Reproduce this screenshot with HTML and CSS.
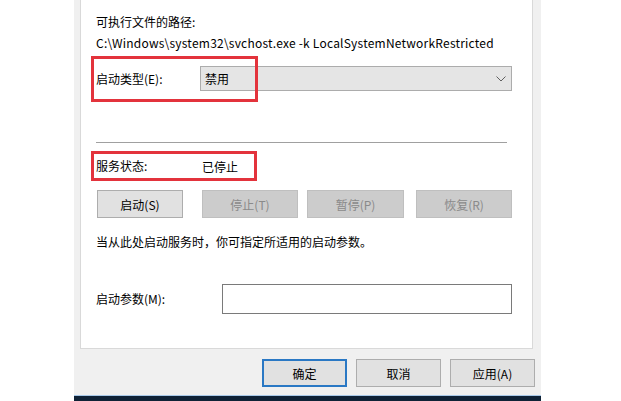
FILE: index.html
```html
<!DOCTYPE html>
<html lang="zh-CN">
<head>
<meta charset="utf-8">
<title>服务属性</title>
<link rel="stylesheet" href="styles.css">
</head>
<body>
<div class="page">
  <div class="dialog">
    <div class="panel">
      <div class="line">可执行文件的路径:</div>
      <div class="line path">C:\Windows\system32\svchost.exe -k LocalSystemNetworkRestricted</div>

      <div class="row startup">
        <span class="label">启动类型(E):</span>
        <div class="select">
          <span class="select-value">禁用</span>
          <svg class="chevron" width="10" height="6" viewBox="0 0 10 6"><polyline points="0.5,0.5 5,5 9.5,0.5" fill="none" stroke="#606060" stroke-width="1"/></svg>
        </div>
        <div class="mark mark-startup"></div>
      </div>

      <div class="separator"></div>

      <div class="row status">
        <span class="label">服务状态:</span>
        <span class="status-value">已停止</span>
        <div class="mark mark-status"></div>
      </div>

      <div class="actions">
        <button class="btn btn-start">启动(S)</button>
        <button class="btn btn-stop" disabled>停止(T)</button>
        <button class="btn btn-pause" disabled>暂停(P)</button>
        <button class="btn btn-resume" disabled>恢复(R)</button>
      </div>

      <div class="line hint">当从此处启动服务时，你可指定所适用的启动参数。</div>

      <div class="row params">
        <span class="label param-label">启动参数(M):</span>
        <div class="input"></div>
      </div>
    </div>

    <div class="footer">
      <button class="btn btn-foot btn-ok">确定</button>
      <button class="btn btn-foot">取消</button>
      <button class="btn btn-foot">应用(A)</button>
    </div>
  </div>
</div>
</body>
</html>
```

FILE: styles.css
```css
html, body {
  margin: 0;
  padding: 0;
  background: #ffffff;
}

body {
  width: 621px;
  height: 401px;
  overflow: hidden;
  font-family: "Noto Sans CJK SC", "Noto Sans", sans-serif;
  font-size: 12px;
  color: #000000;
}

.page {
  padding-left: 74px;
}

.dialog {
  width: 467px;
  height: 396px;
  background: #f0f0f0;
  padding: 0 6px 0 6px;
  box-sizing: border-box;
  border-bottom: 1px solid #a9c9e8;
  box-shadow: 0 5px 0 0 #0f2236;
  display: flex;
  flex-direction: column;
}

.panel {
  width: 453px;
  box-sizing: border-box;
  background: #ffffff;
  border: 1px solid #d9d9d9;
  border-top: none;
  padding: 14px 20px 35px 15px;
  height: 349px;
}

.line {
  line-height: 16px;
  height: 16px;
  white-space: nowrap;
}

.path {
  margin-top: 5px;
  letter-spacing: 0.22px;
}

.row {
  position: relative;
  display: flex;
  align-items: center;
}

.label {
  line-height: 16px;
}

.startup {
  margin-top: 15px;
  height: 25px;
}

.startup .label {
  width: 104px;
  flex: none;
}

.select {
  flex: 1;
  height: 25px;
  box-sizing: border-box;
  background: #e5e5e5;
  border: 1px solid #acacac;
  display: flex;
  align-items: center;
  justify-content: space-between;
  padding: 0 5px 0 4px;
}

.chevron {
  display: block;
}

.mark {
  position: absolute;
  border: 3px solid #e3333c;
  box-sizing: border-box;
  pointer-events: none;
}

.mark-startup {
  left: -5px;
  top: -10px;
  width: 167px;
  height: 46px;
}

.separator {
  margin-top: 51px;
  margin-right: 5px;
  height: 1px;
  background: #a0a0a0;
}

.status {
  margin-top: 15px;
  height: 16px;
}

.status .label {
  width: 106px;
  flex: none;
}

.mark-status {
  left: -5px;
  top: -7px;
  width: 166px;
  height: 30px;
}

.actions {
  margin-top: 16px;
  display: flex;
  height: 28px;
}

.btn {
  font-family: inherit;
  font-size: 12px;
  color: #000000;
  background: #e1e1e1;
  border: 1px solid #adadad;
  padding: 0;
  margin: 0;
  height: 28px;
  box-sizing: border-box;
}

.btn:disabled {
  background: #cccccc;
  border-color: #bfbfbf;
  color: #8a8a8a;
}

.btn-start {
  width: 86px;
  margin-left: 1px;
}

.btn-stop {
  width: 96px;
  margin-left: 19px;
}

.btn-pause {
  width: 97px;
  margin-left: 9px;
}

.btn-resume {
  width: 96px;
  margin-left: 12px;
}

.hint {
  margin-top: 16px;
}

.params {
  margin-top: 34px;
  height: 30px;
}

.param-label {
  width: 126px;
  flex: none;
}

.input {
  flex: 1;
  height: 30px;
  box-sizing: border-box;
  border: 1px solid #7a7a7a;
  background: #ffffff;
}

.footer {
  margin-top: 10px;
  display: flex;
  justify-content: flex-end;
  gap: 9px;
}

.btn-foot {
  width: 85px;
  height: 28px;
}

.btn-ok {
  border: 2px solid #2a78c4;
}
```
